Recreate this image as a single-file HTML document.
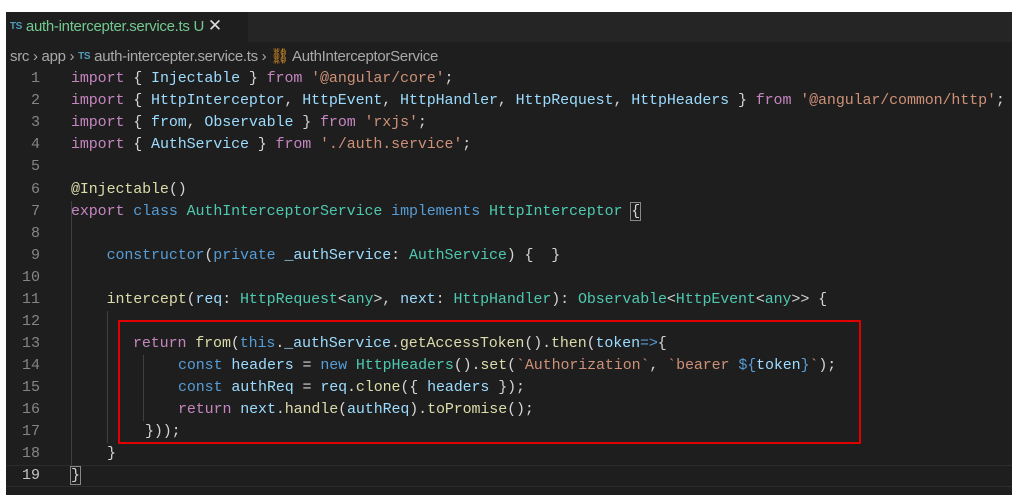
<!DOCTYPE html><html><head><style>
body{margin:0;width:1024px;height:504px;background:#fff;position:relative;overflow:hidden;font-family:"Liberation Mono",monospace}
#ed{position:absolute;left:6px;top:12px;width:1006px;height:483px;background:#1e1e1e}
#tabs{position:absolute;left:0;top:0;width:1006px;height:30px;background:#252526}
#tab{position:absolute;left:0;top:0;width:242px;height:30px;background:#1e1e1e;font:15px "Liberation Sans",sans-serif;color:#73c991;line-height:28px;white-space:nowrap;letter-spacing:-0.3px}
.ts{color:#519aba;font-size:10px;font-weight:bold;vertical-align:2px}
#bc{position:absolute;left:4px;top:35px;font:15px "Liberation Sans",sans-serif;color:#a9a9a9;white-space:nowrap;letter-spacing:-0.3px}
.ln{position:absolute;left:0;width:34px;text-align:right;color:#858585;font-size:15px;line-height:22px}
.cd{position:absolute;left:65px;font-size:15px;line-height:22px;color:#d4d4d4;white-space:pre;letter-spacing:-0.11px}
.k{color:#c586c0}.b{color:#569cd6}.v{color:#9cdcfe}.t{color:#4ec9b0}.f{color:#dcdcaa}.s{color:#ce9178}
.g{position:absolute;width:1px;background:#404040}
#code{position:absolute;left:0;top:2px;width:1006px;height:481px}
</style></head><body>
<div id="ed">
<div id="tabs"><div id="tab">&nbsp;<span class="ts">TS</span> auth-intercepter.service.ts U <span style="color:#ddd;font-size:17px">✕</span></div></div>
<div id="bc">src › app › <span class="ts">TS</span> auth-intercepter.service.ts › <span style="color:#ee9d28">⛓</span> AuthInterceptorService</div>
<div id="code">
<div style="position:absolute;left:0;top:451px;width:1006px;height:22px;border-top:1px solid #2c2c2c;border-bottom:1px solid #2c2c2c;box-sizing:border-box"></div>
<div class="g" style="left:65px;top:187px;height:264px"></div>
<div class="g" style="left:101px;top:297px;height:132px"></div>
<div class="g" style="left:137px;top:341px;height:66px"></div>
<div style="position:absolute;left:112px;top:306px;width:743px;height:124px;border:2px solid #e00000;box-sizing:border-box"></div>
<div class="ln" style="top:54px">1</div><div class="cd" style="top:54px"><span class="k">import</span> { <span class="v">Injectable</span> } <span class="k">from</span> <span class="s">'@angular/core'</span>;</div>
<div class="ln" style="top:76px">2</div><div class="cd" style="top:76px"><span class="k">import</span> { <span class="v">HttpInterceptor</span>, <span class="v">HttpEvent</span>, <span class="v">HttpHandler</span>, <span class="v">HttpRequest</span>, <span class="v">HttpHeaders</span> } <span class="k">from</span> <span class="s">'@angular/common/http'</span>;</div>
<div class="ln" style="top:98px">3</div><div class="cd" style="top:98px"><span class="k">import</span> { <span class="v">from</span>, <span class="v">Observable</span> } <span class="k">from</span> <span class="s">'rxjs'</span>;</div>
<div class="ln" style="top:120px">4</div><div class="cd" style="top:120px"><span class="k">import</span> { <span class="v">AuthService</span> } <span class="k">from</span> <span class="s">'./auth.service'</span>;</div>
<div class="ln" style="top:142px">5</div>
<div class="ln" style="top:165px">6</div><div class="cd" style="top:165px"><span class="f">@Injectable</span>()</div>
<div class="ln" style="top:187px">7</div><div class="cd" style="top:187px"><span class="k">export</span> <span class="b">class</span> <span class="t">AuthInterceptorService</span> <span class="b">implements</span> <span class="t">HttpInterceptor</span> <span style="outline:1px solid #888">{</span></div>
<div class="ln" style="top:209px">8</div>
<div class="ln" style="top:231px">9</div><div class="cd" style="top:231px">    <span class="b">constructor</span>(<span class="b">private</span> <span class="v">_authService</span>: <span class="t">AuthService</span>) {  }</div>
<div class="ln" style="top:253px">10</div>
<div class="ln" style="top:275px">11</div><div class="cd" style="top:275px">    <span class="f">intercept</span>(<span class="v">req</span>: <span class="t">HttpRequest</span>&lt;<span class="t">any</span>&gt;, <span class="v">next</span>: <span class="t">HttpHandler</span>): <span class="t">Observable</span>&lt;<span class="t">HttpEvent</span>&lt;<span class="t">any</span>&gt;&gt; {</div>
<div class="ln" style="top:297px">12</div>
<div class="ln" style="top:319px">13</div><div class="cd" style="top:319px;left:127px"><span class="k">return</span> <span class="f">from</span>(<span class="b">this</span>.<span class="v">_authService</span>.<span class="f">getAccessToken</span>().<span class="f">then</span>(<span class="v">token</span><span class="b">=&gt;</span>{</div>
<div class="ln" style="top:341px">14</div><div class="cd" style="top:341px;left:172px"><span class="b">const</span> <span class="v">headers</span> = <span class="b">new</span> <span class="t">HttpHeaders</span>().<span class="f">set</span>(<span class="s">`Authorization`</span>, <span class="s">`bearer </span><span class="b">${</span><span class="v">token</span><span class="b">}</span><span class="s">`</span>);</div>
<div class="ln" style="top:363px">15</div><div class="cd" style="top:363px;left:172px"><span class="b">const</span> <span class="v">authReq</span> = <span class="v">req</span>.<span class="f">clone</span>({ <span class="v">headers</span> });</div>
<div class="ln" style="top:385px">16</div><div class="cd" style="top:385px;left:172px"><span class="k">return</span> <span class="v">next</span>.<span class="f">handle</span>(<span class="v">authReq</span>).<span class="f">toPromise</span>();</div>
<div class="ln" style="top:407px">17</div><div class="cd" style="top:407px;left:139px">}));</div>
<div class="ln" style="top:429px">18</div><div class="cd" style="top:429px;left:101px">}</div>
<div class="ln" style="top:451px;color:#c6c6c6">19</div><div class="cd" style="top:451px"><span style="outline:1px solid #888">}</span></div>
</div>
</div>
</body></html>
